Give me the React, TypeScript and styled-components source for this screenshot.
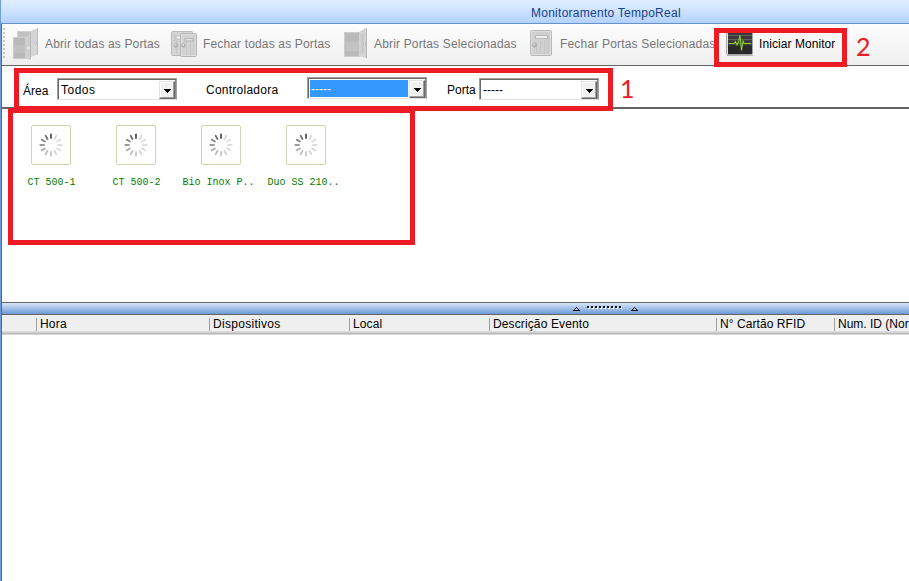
import React from 'react';
import styled, { createGlobalStyle } from 'styled-components';

const GlobalStyle = createGlobalStyle`
  * { box-sizing: border-box; }
  body { margin: 0; background: #fff; overflow: hidden; }
`;

const Window = styled.div`
  position: relative;
  display: flex;
  flex-direction: column;
  width: 909px;
  height: 581px;
  overflow: hidden;
  background: #fff;
  border-left: 1px solid #6f9ddb;
  font: 12px/14px 'Liberation Sans', Arial, sans-serif;
  color: #000;
  white-space: nowrap;
`;

const TitleBar = styled.header`
  flex: none;
  height: 24px;
  padding: 6px 0 0 530px;
  color: #15428b;
  background: linear-gradient(#e0edff, #cfe3ff 45%, #b2d2ff);
  border-bottom: 1px solid #6593cf;
`;

const Body = styled.main`
  flex: 1;
  min-height: 0;
  display: flex;
  flex-direction: column;
  border-left: 1px solid #5f6670;
`;

const Text = styled.span<{ $spacing?: number }>`
  display: block;
  letter-spacing: ${p => p.$spacing ?? 0}px;
`;

const Toolbar = styled.nav`
  flex: none;
  display: flex;
  height: 42px;
  padding-left: 1px;
  background: linear-gradient(#fdfdfd, #efefef);
  border-bottom: 1px solid #646464;
`;

const Grip = styled.div`
  flex: none;
  width: 2px;
  height: 31px;
  margin: 4px 8px 0 0;
  background: repeating-linear-gradient(#c4c4c4 0 2px, transparent 2px 4px);
`;

const ToolButton = styled.div<{ $width: number; $gap: number; $enabled?: boolean }>`
  flex: none;
  display: flex;
  width: ${p => p.$width}px;
  gap: ${p => p.$gap}px;
  color: ${p => (p.$enabled ? '#000' : '#777')};
  svg { flex: none; margin-top: 3px; }
  span { margin-top: 13px; }
`;

const FilterBar = styled.section`
  flex: none;
  display: flex;
  align-items: flex-start;
  height: 43px;
  padding: 11px 0 0 21px;
  border-bottom: 2px solid #646464;
`;

const Label = styled.label<{ $width: number; $drop?: number; $spacing?: number }>`
  flex: none;
  width: ${p => p.$width}px;
  padding-top: ${p => 6 + (p.$drop ?? 0)}px;
  letter-spacing: ${p => p.$spacing ?? 0}px;
`;

const Combo = styled.div<{ $raised?: boolean; $after: number }>`
  flex: none;
  display: flex;
  width: 120px;
  height: 22px;
  margin: ${p => (p.$raised ? 0 : 1)}px ${p => p.$after}px 0 0;
  padding: 1px;
  border: 1px solid #a0a0a0;
  border-bottom-color: #e3e3e3;
  box-shadow: inset 1px 1px #696969, inset -1px 0 #8a8a8a;
`;

const ComboValue = styled.div<{ $selected?: boolean; $spacing?: number }>`
  flex: 1;
  margin: 1px 1px 0 1px;
  padding: 2px 0 0 1px;
  line-height: 15px;
  letter-spacing: ${p => p.$spacing ?? 0}px;
  color: ${p => (p.$selected ? '#fff' : '#000')};
  background: ${p => (p.$selected ? '#3399ff' : '#fff')};
`;

const ComboButton = styled.div`
  width: 16px;
  height: 18px;
  margin-top: 1px;
  padding: 7px 0 0 4px;
  background: #f0f0f0;
  border: 1px solid #e3e3e3;
  border-right-color: #696969;
  border-bottom-color: #696969;
  box-shadow: inset -1px -1px #a0a0a0, inset 1px 1px #fff;
  svg { display: block; }
`;

const DevicePane = styled.section`
  flex: none;
  display: grid;
  grid-template-columns: repeat(4, 85px);
  align-content: start;
  height: 194px;
  padding: 16px 0 0 7px;
  border-bottom: 1px solid #646464;
`;

const Device = styled.div`
  display: flex;
  flex-direction: column;
  align-items: center;
  gap: 11px;
`;

const DeviceIcon = styled.div`
  width: 40px;
  height: 40px;
  margin-right: 2px;
  border: 1px solid #ccd8ae;
  border-radius: 2px;
  svg { display: block; }
`;

const DeviceName = styled.div`
  font: 10px/13px 'Liberation Mono', monospace;
  color: #008000;
  white-space: pre;
`;

const Splitter = styled.div`
  flex: none;
  height: 12px;
  padding-left: 571px;
  background: linear-gradient(#d8e6fa, #b3cbee 35%, #6c99d6);
  border-bottom: 1px solid #646464;
  svg { display: block; }
`;

const TableHead = styled.div`
  flex: none;
  display: flex;
  height: 20px;
  padding-top: 3px;
  padding-left: 34px;
  background: linear-gradient(#efefef 0 16px, #dedede 16px 17px, #cfcfcf 17px 18px, #b9b9b9 18px 19px, #d8d8d8 19px);
`;

const HeadCell = styled.div<{ $width: number; $spacing?: number }>`
  flex: none;
  width: ${p => p.$width}px;
  height: 13px;
  padding-left: 3px;
  line-height: 13px;
  border-left: 1px solid #a0a0a0;
  letter-spacing: ${p => p.$spacing ?? 0}px;
`;

const Highlight = styled.div<{ $x: number; $y: number; $w: number; $h: number }>`
  position: absolute;
  left: ${p => p.$x - 1}px;
  top: ${p => p.$y}px;
  width: ${p => p.$w}px;
  height: ${p => p.$h}px;
  border: 5px solid #ed1c24;
`;

const Callout = styled.div<{ $x: number; $y: number }>`
  position: absolute;
  left: ${p => p.$x - 1}px;
  top: ${p => p.$y}px;
  color: #ed1c24;
  font: 25px/30px Lato, sans-serif;
`;

const OpenDoorIcon = () => (
  <svg width="24" height="34" viewBox="0 0 24 34">
    <path d="M0 5H16V30H0z" fill="#cdcdcd" />
    <path d="M1 6H16V29H1z" fill="#bbbbbb" />
    <path d="M1 15H16V24H1z" fill="#c3c3c3" />
    <path d="M15 5L22 1V31L15 29z" fill="#d3d3d3" />
    <path d="M17 7L20 5.500V27L17 26z" fill="#cacaca" />
    <path d="M22.500 1V31" stroke="#b9b9b9" />
    <circle cx="20.500" cy="17" r="1.200" fill="#eee" stroke="#aaa" strokeWidth=".6" />
  </svg>
);

const CloseSelectedIcon = () => (
  <svg width="22" height="34" viewBox="0 0 22 34">
    <rect x=".5" y="3.500" width="21" height="25" rx="1" fill="#d0d0d0" stroke="#b9b9b9" />
    <rect x="1.500" y="4.500" width="19" height="23" fill="none" stroke="#dedede" />
    <path d="M6.500 14v13M10.500 14v13M14.500 14v13M18.500 7v20" stroke="#c6c6c6" />
    <rect x="5.500" y="8.500" width="12" height="3" fill="#f0f0f0" stroke="#b6b6b6" />
    <circle cx="4.500" cy="18" r="2.500" fill="#b2b2b2" />
    <circle cx="4" cy="17.500" r="1" fill="#dadada" />
  </svg>
);

const OpenAllIcon = () => (
  <svg width="26" height="34" viewBox="0 0 26 34">
    <path d="M4 4H18V26H4z" fill="#d0d0d0" />
    <path d="M5 5H18V26H5z" fill="#c2c2c2" />
    <path d="M18 4L25 1V27L18 30z" fill="#d5d5d5" />
    <path d="M24.500 1V28" stroke="#bdbdbd" />
    <path d="M0 10H14V32H0z" fill="#cdcdcd" />
    <path d="M1 11H14V31H1z" fill="#b9b9b9" />
    <path d="M1 18H13V26H1z" fill="#bfbfbf" />
    <path d="M12 11L17.500 7V33L12 31z" fill="#cfcfcf" />
    <path d="M17.500 7V32" stroke="#b9b9b9" />
    <circle cx="15.500" cy="21" r="1" fill="#eee" />
    <circle cx="22.500" cy="16" r="1.100" fill="#eee" stroke="#aaa" strokeWidth=".5" />
  </svg>
);

const CloseAllIcon = () => (
  <svg width="27" height="34" viewBox="0 0 27 34">
    <rect x=".5" y="4.500" width="21" height="24" rx="1" fill="#d4d4d4" stroke="#b9b9b9" />
    <path d="M5.500 12v15M3.500 7v8" stroke="#c6c6c6" />
    <rect x="5" y="9" width="5" height="3" fill="#f2f2f2" stroke="#b4b4b4" strokeWidth=".8" />
    <circle cx="5" cy="18.500" r="2.300" fill="#b0b0b0" />
    <circle cx="4.500" cy="18" r="1" fill="#dadada" />
    <rect x="9.500" y="6.500" width="16" height="23" rx="1" fill="#d2d2d2" stroke="#b6b6b6" />
    <rect x="10.500" y="7.500" width="14" height="21" fill="none" stroke="#dedede" />
    <path d="M15.500 15v13M19.500 15v13M23 8v20" stroke="#c6c6c6" />
    <rect x="14" y="11.500" width="8" height="2.500" fill="#dedede" stroke="#b0b0b0" strokeWidth=".8" />
    <circle cx="12.500" cy="18.500" r="2.200" fill="#b0b0b0" />
    <circle cx="12" cy="18" r="1" fill="#dadada" />
  </svg>
);

const MonitorIcon = () => (
  <svg width="28" height="34" viewBox="0 0 28 34">
    <rect x="0.500" y="3.500" width="26" height="24" rx="1" fill="#e4e4e4" stroke="#a6a6a6" />
    <path d="M1 28.500H27" stroke="#b5b5b5" />
    <rect x="2" y="5" width="24" height="22" fill="#353535" />
    <path d="M2 8.500h24M2 12.500h24M2 16.500h24" stroke="#5d5d5d" strokeWidth="1.600" />
    <rect x="2" y="19" width="24" height="8" fill="#292929" />
    <path d="M3 16.500H8L9.500 14.500L11 18L12.500 15L14 8L15.500 23.500L17 14L18 16.500H25" fill="none" stroke="#8cc92a" strokeWidth="1.100" />
  </svg>
);

const Arrow = () => (
  <svg width="8" height="4" viewBox="0 0 8 4" shapeRendering="crispEdges">
    <path d="M0 0H7V1H6V2H5V3H4V4H3V3H2V2H1V1H0z" fill="#000" />
  </svg>
);

const spokes = ['#555', '#d9d9d9', '#dddddd', '#dedede', '#dadada', '#d3d3d3', '#c8c8c8', '#bcbcbc', '#adadad', '#9c9c9c', '#888', '#707070'];
const Spinner = () => (
  <svg width="38" height="38" viewBox="0 0 38 38">
    {spokes.map((color, i) => (
      <path key={i} d="M19 8.300V12" transform={`rotate(${i * 30} 19 19)`} stroke={color} strokeWidth="1.800" strokeLinecap="round" />
    ))}
  </svg>
);

const SplitterMarks = () => (
  <svg width="66" height="11" viewBox="0 0 66 11" shapeRendering="crispEdges">
    <path d="M3 4h1v1h1v1h1v1h1v1H0V7h1V6h1V5h1z" fill="#111" />
    <path d="M3 5h1v1h1v1H2V6h1z" fill="#a9c4eb" />
    <path d="M61 4h1v1h1v1h1v1h1v1H58V7h1V6h1V5h1z" fill="#111" />
    <path d="M61 5h1v1h1v1H60V6h1z" fill="#a9c4eb" />
    {Array.from({ length: 9 }, (_, i) => (
      <g key={i}>
        <rect x={15 + i * 4} y="4" width="2" height="2" fill="#f6f9ff" />
        <rect x={14 + i * 4} y="3" width="2" height="2" fill="#111" />
      </g>
    ))}
  </svg>
);

const devices = ['CT 500-1', 'CT 500-2', 'Bio Inox P.. ', 'Duo SS 210.. '];
const columns = [
  { name: 'Hora', width: 173, spacing: 0.2 },
  { name: 'Dispositivos', width: 140, spacing: 0.3 },
  { name: 'Local', width: 140, spacing: 0.1 },
  { name: 'Descrição Evento', width: 227, spacing: 0.12 },
  { name: 'N° Cartão RFID', width: 118, spacing: 0.07 },
  { name: 'Num. ID (Nor', width: 120 },
];

export default function App() {
  return (
    <>
      <GlobalStyle />
      <Window>
        <TitleBar><Text $spacing={0.26}>Monitoramento TempoReal</Text></TitleBar>
        <Body>
          <Toolbar>
            <Grip />
            <ToolButton $width={158} $gap={6}><OpenAllIcon /><Text $spacing={0.14}>Abrir todas as Portas</Text></ToolButton>
            <ToolButton $width={173} $gap={5}><CloseAllIcon /><Text $spacing={0.15}>Fechar todas as Portas</Text></ToolButton>
            <ToolButton $width={186} $gap={6}><OpenDoorIcon /><Text $spacing={0.16}>Abrir Portas Selecionadas</Text></ToolButton>
            <ToolButton $width={196} $gap={8}><CloseSelectedIcon /><Text $spacing={0.18}>Fechar Portas Selecionadas</Text></ToolButton>
            <ToolButton $width={120} $gap={5} $enabled><MonitorIcon /><Text $spacing={0.07}>Iniciar Monitor</Text></ToolButton>
          </Toolbar>
          <FilterBar>
            <Label $width={34} $drop={1}>Área</Label>
            <Combo $after={29}><ComboValue $spacing={0.5}>Todos</ComboValue><ComboButton><Arrow /></ComboButton></Combo>
            <Label $width={101} $spacing={0.25}>Controladora</Label>
            <Combo $raised $after={20}><ComboValue $selected>-----</ComboValue><ComboButton><Arrow /></ComboButton></Combo>
            <Label $width={32}>Porta</Label>
            <Combo $after={0}><ComboValue>-----</ComboValue><ComboButton><Arrow /></ComboButton></Combo>
          </FilterBar>
          <DevicePane>
            {devices.map(name => (
              <Device key={name}>
                <DeviceIcon><Spinner /></DeviceIcon>
                <DeviceName>{name}</DeviceName>
              </Device>
            ))}
          </DevicePane>
          <Splitter><SplitterMarks /></Splitter>
          <TableHead>
            {columns.map(c => (
              <HeadCell key={c.name} $width={c.width} $spacing={c.spacing}>{c.name}</HeadCell>
            ))}
          </TableHead>
        </Body>
        <Highlight $x={714} $y={28} $w={133} $h={39} />
        <Highlight $x={14} $y={68} $w={599} $h={43} />
        <Highlight $x={8} $y={108} $w={407} $h={137} />
        <Callout $x={620} $y={73}>1</Callout>
        <Callout $x={856} $y={31}>2</Callout>
      </Window>
    </>
  );
}
